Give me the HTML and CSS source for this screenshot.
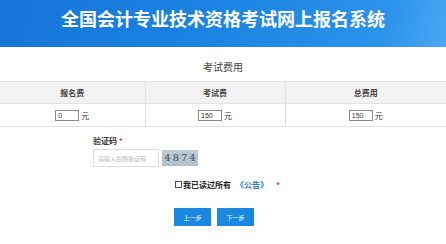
FILE: index.html
```html
<!DOCTYPE html>
<html lang="zh-CN">

<head>
  <meta charset="UTF-8">
  <meta name="viewport" content="width=device-width, initial-scale=1.0">
  <title>全国会计专业技术资格考试网上报名系统</title>
  <link rel="stylesheet" href="styles.css">
</head>

<body>

  <div class="site-header">全国会计专业技术资格考试网上报名系统</div>

  <div class="fee-title">考试费用</div>

  <table class="fee-table">
    <colgroup>
      <col class="col-a">
      <col class="col-b">
      <col>
    </colgroup>
    <tr>
      <th>报名费</th>
      <th>考试费</th>
      <th>总费用</th>
    </tr>
    <tr>
      <td><input class="fee-input" type="text" value="0" readonly><span class="unit">元</span></td>
      <td><input class="fee-input" type="text" value="150" readonly><span class="unit">元</span></td>
      <td><input class="fee-input" type="text" value="150" readonly><span class="unit">元</span></td>
    </tr>
  </table>

  <div class="verify">
    <div class="verify-label">验证码 <span class="req">*</span></div>
    <div class="verify-row">
      <input class="verify-input" type="text" placeholder="请输入右侧验证码">
      <div class="captcha">4874</div>
    </div>
  </div>

  <div class="agree">
    <input class="agree-box" type="checkbox">
    <span class="agree-text">我已读过所有</span>
    <a class="notice-link" href="#">《公告》</a>
    <span class="req">*</span>
  </div>

  <div class="actions">
    <button class="step-button">上一步</button>
    <button class="step-button">下一步</button>
  </div>

</body>

</html>
```

FILE: styles.css
```css
/* Page base */
body {
  margin: 0;
  padding: 0;
  font-family: "Noto Sans CJK SC", "Noto Sans", sans-serif;
  color: #333;
  background: #fff;
}

/* Blue top banner */
.site-header {
  height: 47px;
  line-height: 36px;
  text-align: center;
  font-size: 18px;
  font-weight: bold;
  color: #fff;
  background: linear-gradient(110deg, #1675d7 0%, #1c84e2 50%, #2b93eb 85%, #4aa8f2 100%);
}

/* Section title */
.fee-title {
  height: 28px;
  padding-top: 6px;
  line-height: 28px;
  text-align: center;
  font-size: 10px;
  color: #444;
}

/* Fee table */
.fee-table {
  width: 100%;
  border-collapse: collapse;
  table-layout: fixed;
}

.fee-table .col-a {
  width: 145px;
}

.fee-table .col-b {
  width: 140px;
}

.fee-table th,
.fee-table td {
  border: 1px solid #e2e2e2;
  text-align: center;
  padding: 0;
}

.fee-table tr > :first-child {
  border-left: none;
}

.fee-table tr > :last-child {
  border-right: none;
}

.fee-table th {
  height: 21px;
  background: #f2f2f2;
  font-size: 8px;
  font-weight: bold;
  color: #444;
}

.fee-table td {
  height: 22px;
  font-size: 8px;
}

.fee-input {
  box-sizing: border-box;
  width: 24px;
  height: 11px;
  padding: 0 0 0 2px;
  margin: 0;
  border: 1px solid #8a8a8a;
  font-family: "Liberation Sans", sans-serif;
  font-size: 7px;
  color: #333;
  vertical-align: middle;
}

.unit {
  display: inline-block;
  margin-left: 2px;
  width: 8px;
  font-size: 8px;
  color: #333;
  vertical-align: middle;
}

/* Verification code */
.verify {
  padding-top: 8px;
  margin-left: 93px;
}

.verify-label {
  line-height: 12px;
  font-size: 8px;
  font-weight: bold;
  color: #333;
}

.req {
  color: #e03c3c;
  font-weight: bold;
}

.verify-row {
  display: flex;
  align-items: center;
  gap: 3px;
  margin-top: 2px;
}

.verify-input {
  box-sizing: border-box;
  width: 66px;
  height: 18px;
  margin: 0;
  padding: 0 0 0 4px;
  border: 1px solid #ddd;
  font-size: 6px;
  font-family: "Noto Sans CJK SC", sans-serif;
}

.verify-input::placeholder {
  color: #b5b5b5;
}

.captcha {
  width: 36px;
  height: 16px;
  line-height: 16px;
  text-align: center;
  font-family: "DejaVu Serif", serif;
  font-size: 10px;
  letter-spacing: 2px;
  text-indent: 2px;
  color: #3d4a58;
  background:
    repeating-linear-gradient(35deg, rgba(255, 255, 255, 0.25) 0 1px, transparent 1px 3px),
    linear-gradient(#b7c6d1, #a9bac7);
}

/* Agreement line */
.agree {
  display: flex;
  align-items: center;
  margin: 11px 0 0 175px;
  height: 12px;
  font-size: 8px;
}

.agree-box {
  appearance: none;
  box-sizing: border-box;
  width: 7px;
  height: 7px;
  margin: 0 1px 0 0;
  border: 1px solid #555;
  background: #fff;
}

.agree-text {
  font-weight: bold;
  color: #222;
}

.notice-link {
  margin-left: 5px;
  color: #2a78cc;
  font-weight: bold;
  text-decoration: none;
}

.agree .req {
  margin-left: 8px;
}

/* Step buttons */
.actions {
  display: flex;
  gap: 6px;
  margin: 18px 0 0 174px;
}

.step-button {
  width: 37px;
  height: 18px;
  padding: 0;
  border: none;
  background: #1a88e3;
  color: #fff;
  font-family: "Noto Sans CJK SC", sans-serif;
  font-size: 6px;
  cursor: pointer;
}
```
